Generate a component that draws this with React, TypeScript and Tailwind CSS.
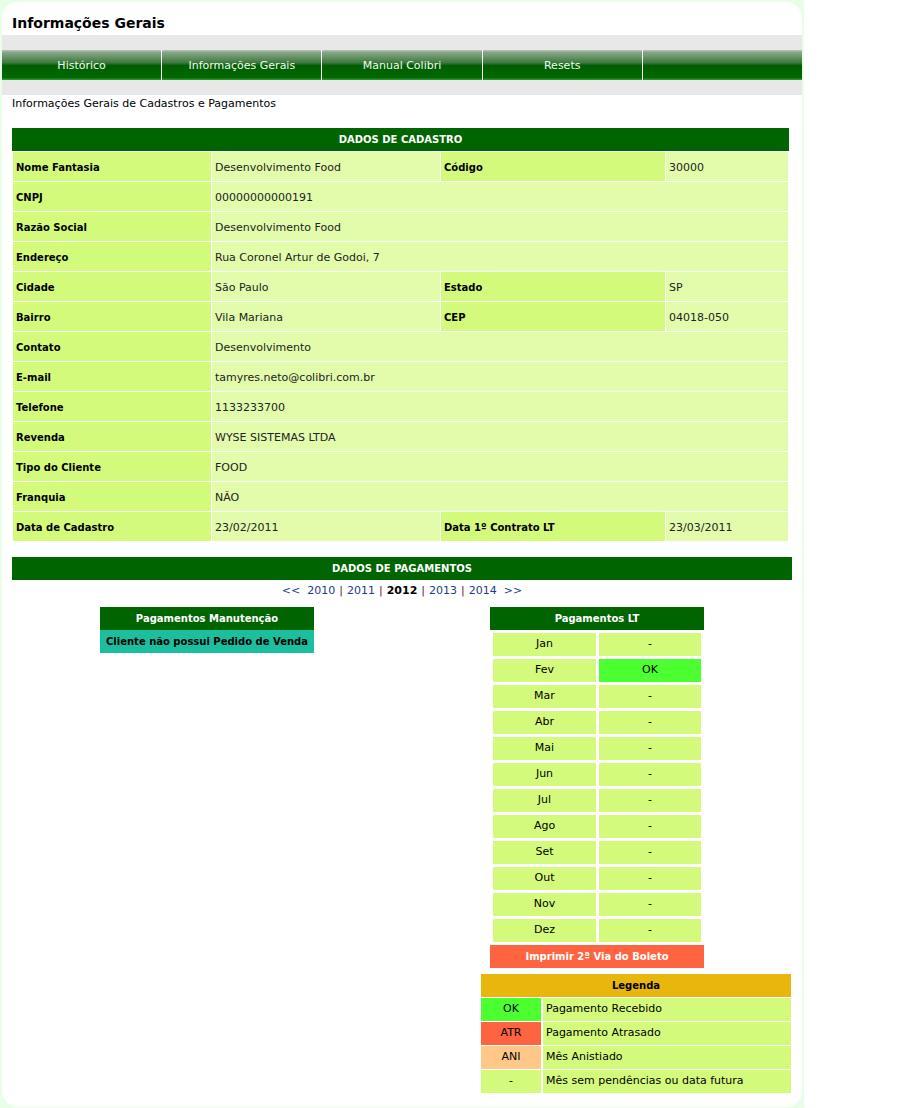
import React from "react";

const cadastro: Array<[string, string, string?, string?]> = [
  ["Nome Fantasia", "Desenvolvimento Food", "Código", "30000"],
  ["CNPJ", "00000000000191"],
  ["Razão Social", "Desenvolvimento Food"],
  ["Endereço", "Rua Coronel Artur de Godoi, 7"],
  ["Cidade", "São Paulo", "Estado", "SP"],
  ["Bairro", "Vila Mariana", "CEP", "04018-050"],
  ["Contato", "Desenvolvimento"],
  ["E-mail", "tamyres.neto@colibri.com.br"],
  ["Telefone", "1133233700"],
  ["Revenda", "WYSE SISTEMAS LTDA"],
  ["Tipo do Cliente", "FOOD"],
  ["Franquia", "NÃO"],
  ["Data de Cadastro", "23/02/2011", "Data 1º Contrato LT", "23/03/2011"],
];

const months = ["Jan", "Fev", "Mar", "Abr", "Mai", "Jun", "Jul", "Ago", "Set", "Out", "Nov", "Dez"];

const nav = ["Histórico", "Informações Gerais", "Manual Colibri", "Resets", ""];

export default function App() {
  return (
    <div className="w-[804px] bg-[#e8fee8] p-[2px] font-['DejaVu_Sans','Verdana',sans-serif] text-[11px] text-black">
      <div className="bg-white rounded-[16px] pb-[14px]">
        <div className="h-[33px] pt-[12px] pl-[10px] text-[14px] font-bold leading-[18px]">
          Informações Gerais
        </div>
        <div className="bg-[#e8e8e8] py-[15px]">
          <div className="flex h-[30px] bg-[linear-gradient(to_bottom,#b8c8b8_0%,#8aa68a_8%,#3d7a3d_42%,#005c00_52%,#006a00_92%,#3a9a3a_100%)]">
            {nav.map((n, i) => (
              <div
                key={i}
                className={
                  i === 0
                    ? "flex-1 flex items-center justify-center text-[#f2faf2] leading-none"
                    : "flex-1 flex items-center justify-center text-[#f2faf2] leading-none border-l border-white"
                }
              >
                {n}
              </div>
            ))}
          </div>
        </div>
        <div className="pt-[2px] pl-[10px] leading-[14px]">Informações Gerais de Cadastros e Pagamentos</div>

        <div className="mt-[17px] ml-[10px] w-[777px]">
          <div className="h-[23px] bg-[#006400] text-white text-[10px] font-bold flex items-center justify-center">
            DADOS DE CADASTRO
          </div>
          <table className="w-full table-fixed border-separate border-spacing-[1px]">
            <colgroup>
              <col className="w-[198px]" />
              <col className="w-[228px]" />
              <col className="w-[224px]" />
              <col />
            </colgroup>
            <tbody>
              {cadastro.map((r, i) => (
                <tr key={i} className="h-[29px]">
                  <td className="bg-[#d4fa7c] pl-[3px] pt-[2px] text-[10px] font-bold">{r[0]}</td>
                  {r[2] ? (
                    <>
                      <td className="bg-[#e2fcac] pl-[3px] pt-[4px] text-[#222]">{r[1]}</td>
                      <td className="bg-[#d4fa7c] pl-[3px] pt-[2px] text-[10px] font-bold">{r[2]}</td>
                      <td className="bg-[#e2fcac] pl-[3px] pt-[4px] text-[#222]">{r[3]}</td>
                    </>
                  ) : (
                    <td colSpan={3} className="bg-[#e2fcac] pl-[3px] pt-[4px] text-[#222]">
                      {r[1]}
                    </td>
                  )}
                </tr>
              ))}
            </tbody>
          </table>
        </div>

        <div className="mt-[15px] ml-[10px] w-[780px]">
          <div className="h-[23px] bg-[#006400] text-white text-[10px] font-bold flex items-center justify-center">
            DADOS DE PAGAMENTOS
          </div>
          <div className="mt-[4px] leading-[14px] text-center">
            <span className="text-[#1c3a8a]">&lt;&lt;</span>
            <span className="text-[#1c3a8a] ml-[7px]">2010</span>
            <span className="text-[#602040] mx-[4px]">|</span>
            <span className="text-[#1c3a8a]">2011</span>
            <span className="text-[#602040] mx-[4px]">|</span>
            <span className="font-bold">2012</span>
            <span className="text-[#602040] mx-[4px]">|</span>
            <span className="text-[#1c3a8a]">2013</span>
            <span className="text-[#602040] mx-[4px]">|</span>
            <span className="text-[#1c3a8a]">2014</span>
            <span className="text-[#1c3a8a] ml-[7px]">&gt;&gt;</span>
          </div>

          <div className="mt-[9px] grid grid-cols-2">
            <div>
              <div className="mx-auto w-[214px]">
                <div className="h-[23px] bg-[#006400] text-white text-[10px] font-bold flex items-center justify-center">
                  Pagamentos Manutenção
                </div>
                <div className="h-[23px] bg-[#1bbf9f] text-[10px] font-bold whitespace-nowrap flex items-center justify-center">
                  Cliente não possui Pedido de Venda
                </div>
              </div>
            </div>
            <div>
              <div className="mx-auto w-[214px]">
                <div className="h-[23px] bg-[#006400] text-white text-[10px] font-bold flex items-center justify-center">
                  Pagamentos LT
                </div>
                <div className="grid grid-cols-[103px_102px] gap-[3px] p-[3px]">
                  {months.map((m) => (
                    <React.Fragment key={m}>
                      <div className="h-[23px] bg-[#d4fa7c] flex items-center justify-center">{m}</div>
                      <div
                        className={
                          m === "Fev"
                            ? "h-[23px] bg-[#4cff30] flex items-center justify-center"
                            : "h-[23px] bg-[#d4fa7c] flex items-center justify-center"
                        }
                      >
                        {m === "Fev" ? "OK" : "-"}
                      </div>
                    </React.Fragment>
                  ))}
                </div>
                <div className="h-[23px] bg-[#ff6440] text-white text-[10px] font-bold flex items-center justify-center">
                  Imprimir 2ª Via do Boleto
                </div>
              </div>
              <div className="mt-[6px] ml-auto mr-[1px] w-[310px]">
                <div className="h-[23px] bg-[#e8b60c] text-[10px] font-bold flex items-center justify-center">
                  Legenda
                </div>
                <div className="grid grid-cols-[60px_1fr] gap-x-[2px] gap-y-[1px] pt-[1px]">
                  <div className="h-[23px] bg-[#4cff30] flex items-center justify-center">OK</div>
                  <div className="h-[23px] bg-[#d4fa7c] flex items-center pl-[3px]">Pagamento Recebido</div>
                  <div className="h-[23px] bg-[#ff6440] flex items-center justify-center">ATR</div>
                  <div className="h-[23px] bg-[#d4fa7c] flex items-center pl-[3px]">Pagamento Atrasado</div>
                  <div className="h-[23px] bg-[#ffc888] flex items-center justify-center">ANI</div>
                  <div className="h-[23px] bg-[#d4fa7c] flex items-center pl-[3px]">Mês Anistiado</div>
                  <div className="h-[23px] bg-[#d4fa7c] flex items-center justify-center">-</div>
                  <div className="h-[23px] bg-[#d4fa7c] flex items-center pl-[3px]">
                    Mês sem pendências ou data futura
                  </div>
                </div>
              </div>
            </div>
          </div>
        </div>
      </div>
    </div>
  );
}
